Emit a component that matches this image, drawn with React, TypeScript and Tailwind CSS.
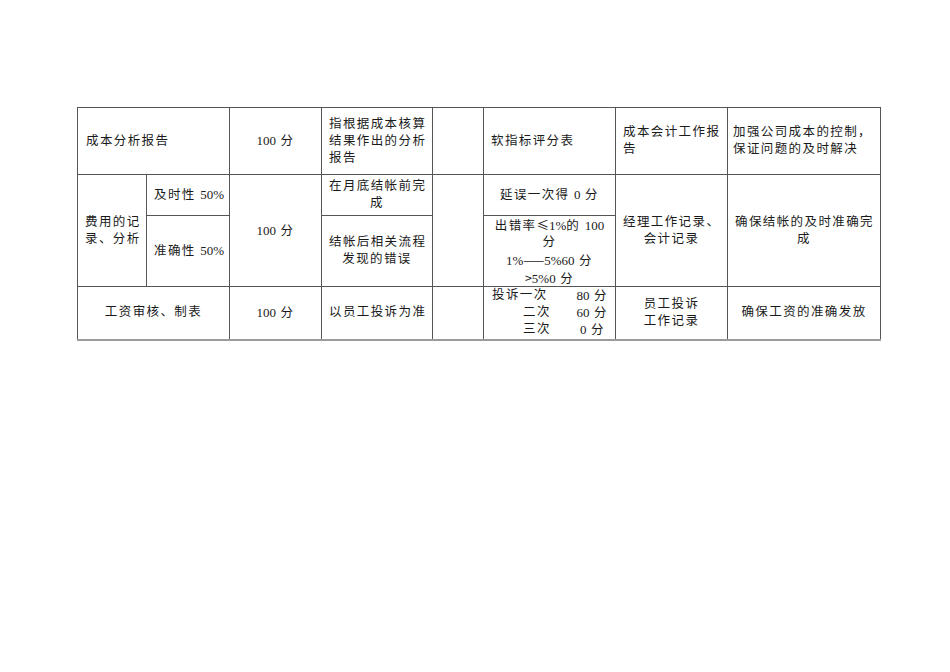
import React from "react";

// Latin runs are set without the CJK letter spacing
const L = ({ children }: { children: React.ReactNode }) => (
  <span className="text-[13px] tracking-normal">{children}</span>
);

// symbols that should take the full-width CJK glyph
const C = ({ children }: { children: React.ReactNode }) => (
  <span className="font-['Noto_Sans_CJK_SC',sans-serif] tracking-normal">{children}</span>
);

const td = "border border-[#555] align-middle px-[7px] py-0";
const last = "border-b-2 border-b-[#9c9c9c]";

const App = () => {
  return (
    <div className="w-[950px] h-[672px] bg-white font-['Liberation_Serif','Noto_Sans_CJK_SC',serif] text-[#1a1a1a] text-[12.5px] leading-[17px] tracking-[1.4px] whitespace-nowrap">
      <div className="pt-[107px] pl-[77px]">
        <table className="table-fixed border-collapse w-[803px]">
          <colgroup>
            <col className="w-[69px]" />
            <col className="w-[83px]" />
            <col className="w-[92px]" />
            <col className="w-[111px]" />
            <col className="w-[51px]" />
            <col className="w-[132px]" />
            <col className="w-[112px]" />
            <col className="w-[153px]" />
          </colgroup>
          <tbody>
            {/* 成本分析报告 */}
            <tr className="h-[67px]">
              <td colSpan={2} className={`${td} text-left pl-[8px]`}>成本分析报告</td>
              <td className={`${td} text-center`}>
                <L>100</L> 分
              </td>
              <td className={`${td} text-left`}>
                指根据成本核算
                <br />
                结果作出的分析
                <br />
                报告
              </td>
              <td className={td}></td>
              <td className={`${td} text-left`}>软指标评分表</td>
              <td className={`${td} text-left`}>
                成本会计工作报
                <br />
                告
              </td>
              <td className={`${td} text-left pl-[5px]`}>
                加强公司成本的控制，
                <br />
                保证问题的及时解决
              </td>
            </tr>

            {/* 费用的记录、分析 */}
            <tr className="h-[41px]">
              <td rowSpan={2} className={`${td} text-center`}>
                费用的记
                <br />
                录、分析
              </td>
              <td className={`${td} text-center`}>
                及时性 <L>50%</L>
              </td>
              <td rowSpan={2} className={`${td} text-center`}>
                <L>100</L> 分
              </td>
              <td className={`${td} text-center`}>
                在月底结帐前完
                <br />
                成
              </td>
              <td rowSpan={2} className={td}></td>
              <td className={`${td} text-center`}>
                延误一次得 <L>0</L> 分
              </td>
              <td rowSpan={2} className={`${td} text-center`}>
                经理工作记录、
                <br />
                会计记录
              </td>
              <td rowSpan={2} className={`${td} text-center`}>
                确保结帐的及时准确完
                <br />
                成
              </td>
            </tr>
            <tr className="h-[71px]">
              <td className={`${td} text-center`}>
                准确性 <L>50%</L>
              </td>
              <td className={`${td} text-center`}>
                结帐后相关流程
                <br />
                发现的错误
              </td>
              <td className={`${td} text-center`}>
                <div className="flex flex-col">
                  <div className="h-[17.5px]">
                    出错率<C>≤</C>
                    <L>1%</L>的 <L>100</L>
                  </div>
                  <div className="h-[17.5px]">分</div>
                  <div className="h-[17.5px]">
                    <L>1%</L>
                    <C>——</C>
                    <L>5%60</L> 分
                  </div>
                  <div className="h-[17.5px]">
                    <C>&gt;</C>
                    <L>5%0</L> 分
                  </div>
                </div>
              </td>
            </tr>

            {/* 工资审核、制表 */}
            <tr className="h-[53px]">
              <td colSpan={2} className={`${td} ${last} text-center`}>工资审核、制表</td>
              <td className={`${td} ${last} text-center`}>
                <L>100</L> 分
              </td>
              <td className={`${td} ${last} text-left`}>以员工投诉为准</td>
              <td className={`${td} ${last}`}></td>
              <td className={`${td} ${last} pl-[8px]`}>
                <div className="flex flex-col">
                  <div className="flex h-[17px]">
                    <span className="w-[86px]">投诉一次</span>
                    <span>
                      <L>80</L> 分
                    </span>
                  </div>
                  <div className="flex h-[17px]">
                    <span className="w-[86px] pl-[31px]">二次</span>
                    <span>
                      <L>60</L> 分
                    </span>
                  </div>
                  <div className="flex h-[17px]">
                    <span className="w-[86px] pl-[31px]">三次</span>
                    <span className="pl-[2px]">
                      <L>0</L> 分
                    </span>
                  </div>
                </div>
              </td>
              <td className={`${td} ${last} text-center`}>
                员工投诉
                <br />
                工作记录
              </td>
              <td className={`${td} ${last} text-center`}>确保工资的准确发放</td>
            </tr>
          </tbody>
        </table>
      </div>
    </div>
  );
};

export default App;
